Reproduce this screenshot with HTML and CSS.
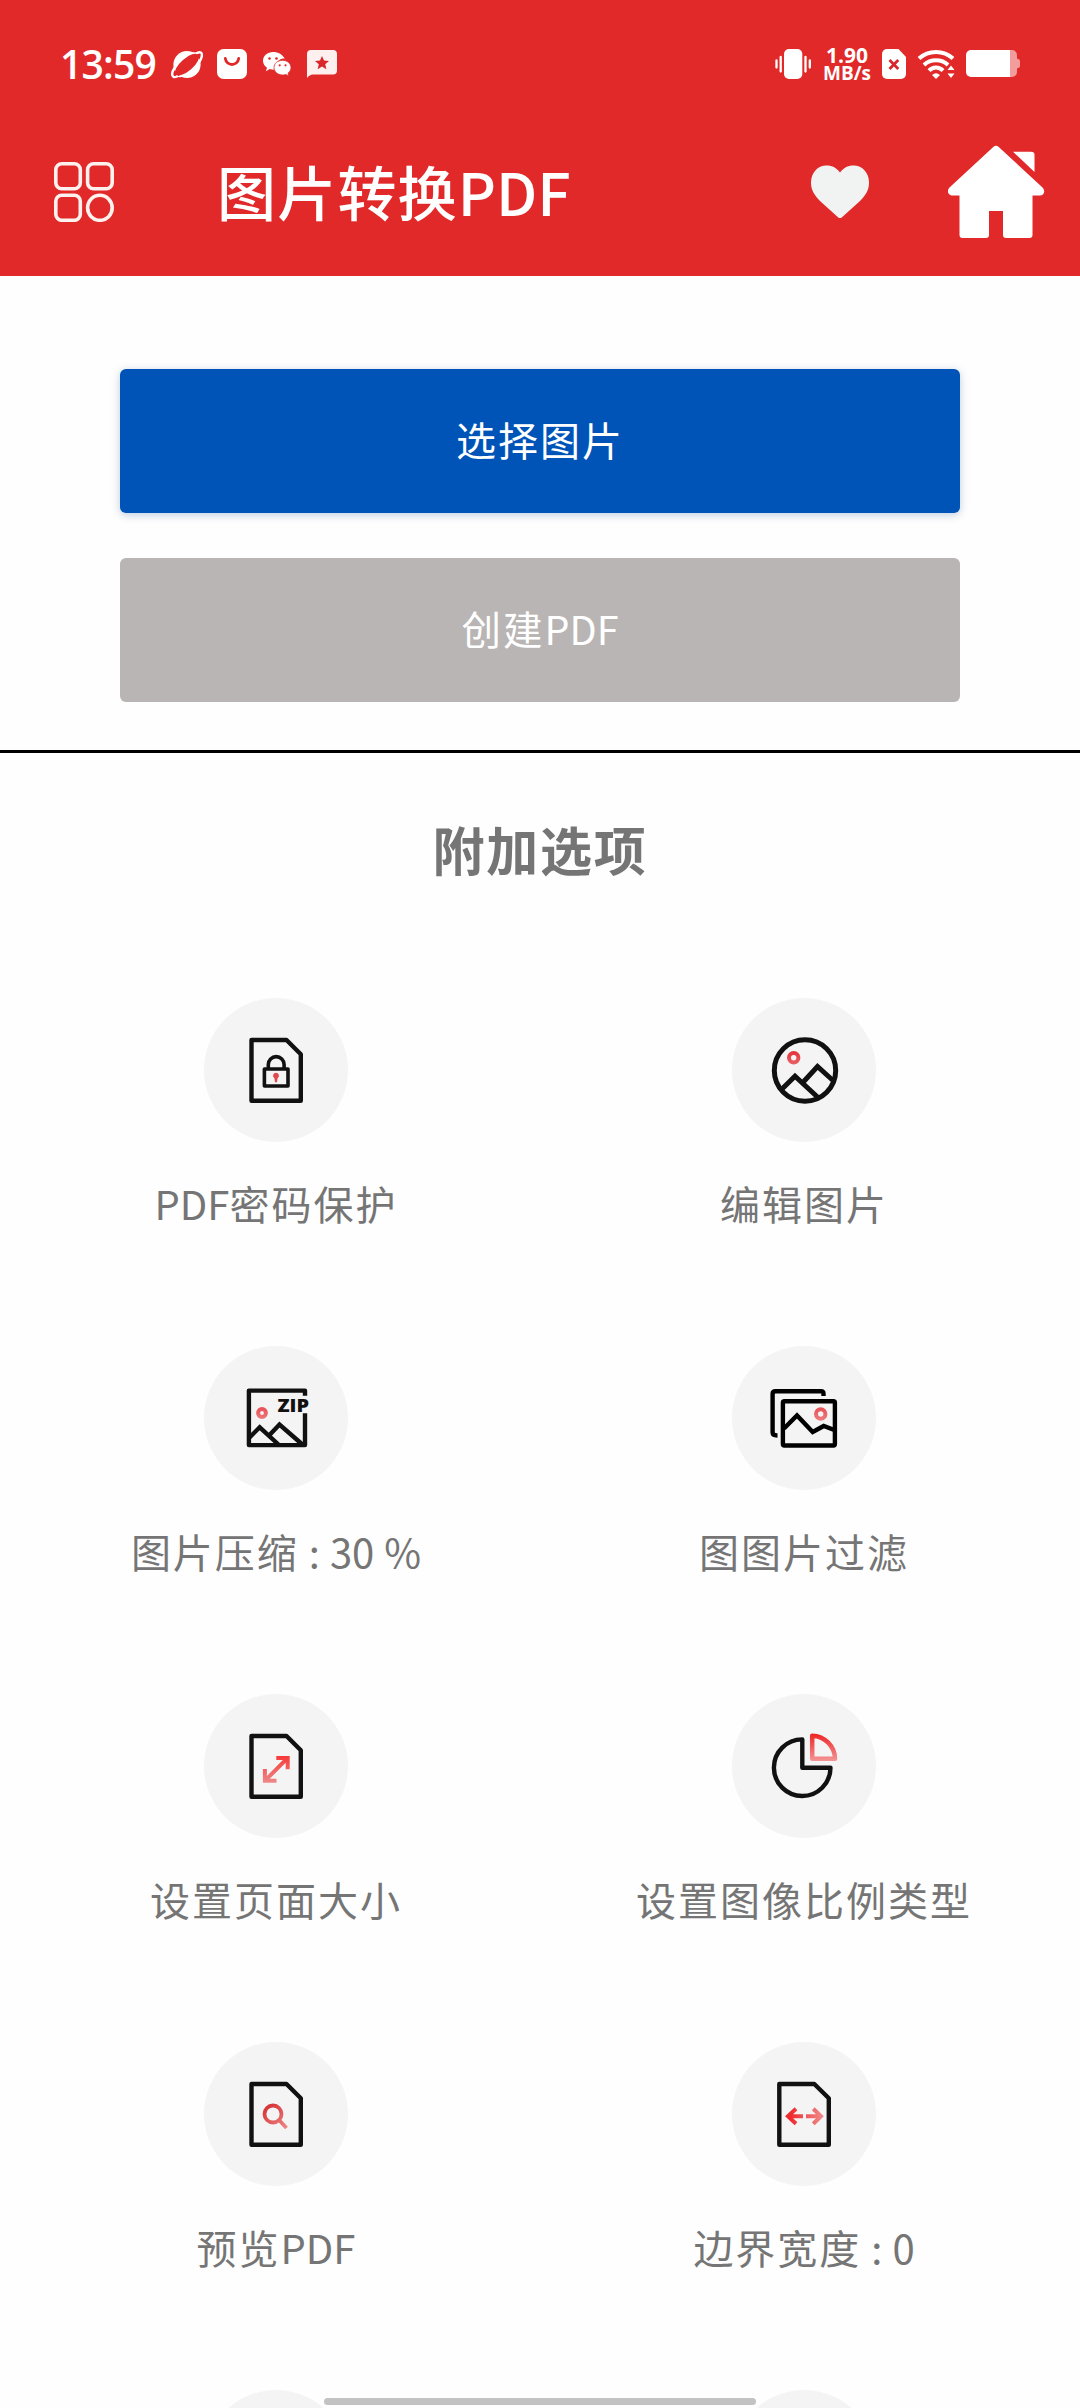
FILE: index.html
```html
<!DOCTYPE html>
<html lang="zh-CN">
<head>
<meta charset="utf-8">
<title>图片转换PDF</title>
<link rel="stylesheet" href="styles.css">
</head>
<body>
<svg class="defs" width="0" height="0" aria-hidden="true">
  <defs>
    <linearGradient id="fade" gradientUnits="userSpaceOnUse" x1="0" y1="58" x2="0" y2="90"><stop offset="0" stop-color="#f82c2c"/><stop offset="1" stop-color="#ee8d8d"/></linearGradient>
    <linearGradient id="fadePie" gradientUnits="userSpaceOnUse" x1="0" y1="40" x2="0" y2="68"><stop offset="0" stop-color="#ee2525"/><stop offset="1" stop-color="#f49a9a"/></linearGradient>
    <linearGradient id="fadeDot" gradientUnits="userSpaceOnUse" x1="0" y1="52" x2="0" y2="78"><stop offset="0" stop-color="#e22f36"/><stop offset="1" stop-color="#f08a8a"/></linearGradient>
    <linearGradient id="fadeSide" gradientUnits="userSpaceOnUse" x1="58" y1="0" x2="92" y2="0"><stop offset="0" stop-color="#f02a2e"/><stop offset="1" stop-color="#f08c8c"/></linearGradient>
    <linearGradient id="fadeLens" gradientUnits="userSpaceOnUse" x1="62" y1="62" x2="82" y2="88"><stop offset="0" stop-color="#d62c30"/><stop offset="1" stop-color="#ec8c8a"/></linearGradient>
  </defs>
</svg>
<div class="screen">
  <header class="top">
    <div class="status">
      <div class="status-left">
        <span class="clock">13:59</span>
        <svg class="i-planet" viewBox="171 49 32 31" width="32" height="31"><circle cx="187" cy="64.5" r="13.6" fill="#fff"/><ellipse cx="187" cy="64.6" rx="15" ry="6.2" transform="rotate(-41 187 64.6)" fill="#e12929"/><path d="M177 76.5C172 79 170.500 74 174.500 68M197 53C202.500 50.500 203.500 55 199.500 62" stroke="#fff" stroke-width="2.4" fill="none" stroke-linecap="round"/><path d="M174 67.500C178 59 190 50.500 198 53.500M200 61.500C196 70 184 79 176 76" stroke="#fff" stroke-width="1.200" fill="none"/></svg>
        <svg class="i-bag" viewBox="217 49 30 30" width="30" height="30"><rect x="217" y="49" width="30" height="30" rx="6.500" fill="#fff"/><path d="M225.300 58.500C226.500 66.500 237.500 66.500 238.700 58.500" fill="none" stroke="#e12929" stroke-width="2.800" stroke-linecap="round"/></svg>
        <svg class="i-chat" viewBox="262 51 31 26" width="31" height="26"><path d="M273 52c-5.500 0-10 3.900-10 8.800 0 2.900 1.500 5.300 4 7l-1.200 3.400 4-2.100c3 .8 5 .8 7 .2-2-7 4-12 8-10.500C282.500 54.500 278.500 52 273 52z" fill="#fff"/><path d="M282.500 60.300c-4.800 0-8.500 3.200-8.500 7.300s3.700 7.400 8.500 7.400c1.200 0 2.300-.2 3.300-.6l3 1.600-.8-2.800c2-1.400 3-3.400 3-5.600 0-4.100-3.800-7.300-8.500-7.300z" fill="#fff" stroke="#e12929" stroke-width=".8"/><g fill="#e12929"><circle cx="269.500" cy="58.500" r="1.300"/><circle cx="276.500" cy="58.500" r="1.300"/><circle cx="279.700" cy="65.300" r="1.100"/><circle cx="285.500" cy="65.300" r="1.100"/></g></svg>
        <svg class="i-star" viewBox="307 50 30 29" width="30" height="29"><path d="M311 50h22a4 4 0 0 1 4 4v16.500a4 4 0 0 1-4 4h-20c-2.500 0-4 1.500-6 3.500V54a4 4 0 0 1 4-4z" fill="#fff0f0"/><path d="M322 56l2 4.600 5 .4-3.800 3.300 1.200 4.900-4.400-2.600-4.400 2.600 1.200-4.900L315 61l5-.4z" fill="#d8262a"/></svg>
      </div>
      <div class="status-right">
        <svg viewBox="773 48 38 32" width="38" height="32"><rect x="783" y="49" width="18.300" height="30" rx="5" fill="#fff"/><path d="M775.500 60.500v7M779.700 57v14.500M804.500 57v14.500M808.800 60.500v7" stroke="#fff" stroke-width="2.300" stroke-linecap="round"/></svg>
        <div class="speed"><span>1.90</span><span>MB/s</span></div>
        <svg class="i-sim" viewBox="882 49 24 30" width="24" height="30"><path d="M887 49h11.500l7.500 8v17a5 5 0 0 1-5 5H887a5 5 0 0 1-5-5V54a5 5 0 0 1 5-5z" fill="#fff"/><path d="M889.500 60l8.800 9M898.300 60l-8.800 9" stroke="#d8262a" stroke-width="2.700"/></svg>
        <svg class="i-wifi" viewBox="917 49 39 31" width="39" height="31"><g fill="none" stroke="#fff" stroke-width="4"><path d="M919 58.500C928.500 49.800 943.500 49.800 953 58.500"/><path d="M924 65C930.500 58.800 941.500 58.800 948 65"/><path d="M929 70.700C933 66.500 939 66.500 943 70.700"/></g><path d="M932 75q4-3.500 8 0l-4 4z" fill="#fff"/><path d="M947.500 70h7l-3.500-4.500zM947.500 73.500h7l-3.500 4.500z" fill="#fff"/></svg>
        <svg class="i-battery" viewBox="966 52 54 28" width="54" height="28"><path d="M1010 52h2a5 5 0 0 1 5 5v3.500l2.200 1q.8.500.8 1.500v5q0 1-.8 1.500l-2.200 1V74a5 5 0 0 1-5 5h-2z" fill="#f29c9c"/><path d="M971 52h39v27h-39a5 5 0 0 1-5-5V57a5 5 0 0 1 5-5z" fill="#fff"/></svg>
      </div>
    </div>
    <div class="bar">
      <svg class="i-menu" viewBox="54 162 60 60" width="60" height="60"><g fill="none" stroke="#fff1ee" stroke-width="3.600"><rect x="55.800" y="163.800" width="24.500" height="25" rx="6"/><rect x="87.600" y="163.800" width="24.600" height="25" rx="6"/><rect x="55.800" y="195.300" width="24.500" height="25" rx="6"/><ellipse cx="99.900" cy="207.800" rx="12.300" ry="12.500"/></g></svg>
      <h1 class="title"><span class="han">图片转换</span>PDF</h1>
      <svg class="i-heart" viewBox="811 165 58 54" width="58" height="54"><path d="M840 172.500C844.500 166.500 849 165.500 853.500 165.500 862.500 165.500 869 173 869 182.500 869 190 866 194.500 860 201L842 217.200Q840 219 838 217.200L820 201C814 194.500 811 190 811 182.500 811 173 817.500 165.500 826.500 165.500 831 165.500 835.500 166.500 840 172.500z" fill="#f0f3f2"/></svg>
      <svg class="i-home" viewBox="947 145 98 94" width="98" height="94" fill="#fff"><path d="M993 147.200Q996 144.500 999 147.200L1042.500 187.500C1046 191.500 1043.500 195.500 1040 195.500H1032.500V235Q1032.500 238 1029.500 238H1006Q1003 238 1003 235V211H989V235Q989 238 986 238H962.500Q959.500 238 959.500 235V195.500H952.500C949 195.500 946 191.500 949.500 187.500z"/><path d="M1013 151.700H1031Q1034.500 151.700 1034.500 155V172z"/></svg>
    </div>
  </header>

  <section class="actions">
    <button class="btn btn-primary"><span class="han">选择图片</span></button>
    <button class="btn btn-disabled"><span class="han">创建</span>PDF</button>
  </section>

  <main class="options">
    <h2 class="heading">附加选项</h2>
    <div class="grid">
      <div class="tile">
        <svg class="disc" viewBox="0 0 144 144"><path class="line" d="M47.500 42H82.500L96.800 56.300V102.800H47.500Z"/><g class="thin"><rect class="line" x="60.400" y="71" width="23.600" height="17"/><path class="line" d="M64.300 70V66.500a7.900 7.900 0 0 1 15.800 0V70"/></g><path d="M72 74.700a3 3 0 0 1 1.600 5.500L73 84.300h-2l-.6-4.100A3 3 0 0 1 72 74.700z" fill="#e04a4e"/></svg>
        <div class="label">PDF<span class="han">密码保护</span></div>
      </div>
      <div class="tile">
        <svg class="disc" viewBox="0 0 144 144"><circle class="line wide" cx="73" cy="72.500" r="30.700"/><path class="line wide miter" d="M49.500 91.500L63 78.200 86 99.500M71.300 84L85.500 68.500 101 82.500"/><circle class="dot" cx="61.700" cy="59.700" r="4.700"/></svg>
        <div class="label"><span class="han">编辑图片</span></div>
      </div>
      <div class="tile">
        <svg class="disc" viewBox="0 0 144 144"><path class="line" d="M101 49.700V44.600H44.900V99.100H101V67.300"/><path class="line miter" d="M45 92L55.700 81.300 75 99M66 88.500L75.500 78.500 99 99"/><circle class="dot" cx="58" cy="67" r="3.900"/><text class="zip" x="73.500" y="65.700" textLength="31.500" lengthAdjust="spacingAndGlyphs">ZIP</text></svg>
        <div class="label"><span class="han">图片压缩</span> : 30 %</div>
      </div>
      <div class="tile">
        <svg class="disc dark" viewBox="0 0 144 144"><rect class="line" x="50.900" y="55.200" width="52" height="44.300" rx="1.500"/><path class="line" d="M91.500 50V47.500Q91.500 45.200 89 45.200H43.500Q40.600 45.200 40.600 48V86.500Q40.600 89.500 45.500 89.500"/><path class="line miter" d="M52 82.500L65 69.500 80.700 86 91.700 80 103 84.300"/><circle class="dot" cx="88.700" cy="68" r="4.700"/></svg>
        <div class="label"><span class="han">图图片过滤</span></div>
      </div>
      <div class="tile">
        <svg class="disc" viewBox="0 0 144 144"><path class="line" d="M47.500 42H82.500L96.800 56.300V102.800H47.500Z"/><path d="M72.300 64H83.700V75.300M60.900 75V86.800H72.500M83 64.700L61.600 86.100" fill="none" stroke="url(#fade)" stroke-width="4"/></svg>
        <div class="label"><span class="han">设置页面大小</span></div>
      </div>
      <div class="tile">
        <svg class="disc" viewBox="0 0 144 144"><path class="line" d="M70.300 73.700V45.400A28.300 28.300 0 1 0 98.500 73.700Z"/><path d="M80.200 64.700V41.700A23.500 23.500 0 0 1 103 64.700Z" fill="none" stroke="url(#fadePie)" stroke-width="4.500" stroke-linejoin="round"/></svg>
        <div class="label"><span class="han">设置图像比例类型</span></div>
      </div>
      <div class="tile">
        <svg class="disc" viewBox="0 0 144 144"><path class="line" d="M47.500 42H82.500L96.800 56.300V102.800H47.500Z"/><g fill="none" stroke="url(#fadeLens)" stroke-width="3.800"><circle cx="69" cy="72" r="8.500"/><path d="M75 78L82.500 86"/></g></svg>
        <div class="label"><span class="han">预览</span>PDF</div>
      </div>
      <div class="tile">
        <svg class="disc" viewBox="0 0 144 144"><path class="line" d="M47.300 42H82.300L96.800 56.300V102.800H47.300Z"/><path d="M71 74.300H57M64 66.800L56 74.300 64 81.800M74 74.300H88M81.300 66.800L89 74.300 81.300 81.800" fill="none" stroke="url(#fadeSide)" stroke-width="4"/></svg>
        <div class="label"><span class="han">边界宽度</span> : 0</div>
      </div>
      <div class="tile"><svg class="disc" viewBox="0 0 144 144"></svg></div>
      <div class="tile"><svg class="disc" viewBox="0 0 144 144"></svg></div>
    </div>
  </main>
  <div class="home-pill"></div>
</div>
</body>
</html>
```

FILE: styles.css
```css
* { box-sizing: border-box; }
html, body { margin: 0; }
body {
  background: #fefefe;
  font-family: "Noto Sans CJK SC", "Noto Sans", sans-serif;
}
svg { display: block; flex: none; }
.defs { position: absolute; }
.screen {
  position: relative;
  width: 1080px;
  height: 2408px;
  overflow: hidden;
}
.top {
  height: 276px;
  background: #e12929;
  color: #fff;
}
.status {
  height: 128px;
  padding: 0 60px;
  display: flex;
  justify-content: space-between;
}
.status-left, .status-right {
  display: flex;
  align-items: center;
  height: 128px;
}
.clock {
  width: 111px;
  font: 600 39px/40px "Open Sans", sans-serif;
  letter-spacing: -0.8px;
  white-space: nowrap;
}
.i-bag { margin-left: 14px; }
.i-chat { margin-left: 15px; }
.i-star { margin-left: 14px; }
.speed {
  width: 50px;
  margin-left: 10px;
  padding-bottom: 1px;
  display: flex;
  flex-direction: column;
  align-items: center;
  font: 700 19px/18px "Open Sans", sans-serif;
  white-space: nowrap;
}
.speed span:first-child { font-size: 21px; }
.i-sim { margin-left: 10px; }
.i-wifi { margin-left: 11px; }
.i-battery { margin-left: 10px; }
.bar {
  height: 128px;
  padding: 0 35px 0 54px;
  display: flex;
  align-items: center;
}
.title {
  flex: 1;
  margin: 0 0 2px 103px;
  font-size: 59px;
  line-height: 80px;
  font-weight: 500;
  white-space: nowrap;
}
.title .han { letter-spacing: 1.2px; }
.i-home { margin-left: 78px; }
.actions {
  height: 477px;
  padding: 93px 120px 0;
  display: flex;
  flex-direction: column;
  gap: 45px;
  border-bottom: 3px solid #000;
}
.btn {
  height: 144px;
  padding: 0 0 4px;
  border: 0;
  border-radius: 6px;
  color: #fff;
  font: 400 40px/56px "Noto Sans CJK SC", sans-serif;
}
.btn-primary {
  background: #0054b8;
  box-shadow: 0 2px 8px rgba(0, 60, 130, 0.25);
}
.btn-disabled {
  background: #b9b5b4;
  font-size: 39.5px;
}
.han { letter-spacing: 2px; }
.heading {
  margin: 0;
  padding-top: 57px;
  height: 245px;
  text-align: center;
  color: #757575;
  font-size: 52px;
  font-weight: 700;
  line-height: 78px;
  letter-spacing: 1.8px;
}
.grid {
  padding: 0 12px;
  display: grid;
  grid-template-columns: 1fr 1fr;
  grid-auto-rows: 348px;
}
.tile {
  display: flex;
  flex-direction: column;
  align-items: center;
}
.disc {
  width: 144px;
  height: 144px;
  border-radius: 50%;
  background: #f4f4f4;
}
.line {
  fill: none;
  stroke: #111;
  stroke-width: 4.4;
  stroke-linejoin: round;
}
.dark .line { stroke: #000; }
.thin .line { stroke-width: 3.6; }
.line.wide { stroke-width: 5; }
.line.miter { stroke-linejoin: miter; }
.dot {
  fill: none;
  stroke: url(#fadeDot);
  stroke-width: 4;
}
.zip {
  font: 800 18px "Open Sans", sans-serif;
  fill: #111;
}
.label {
  margin-top: 33px;
  color: #757575;
  font-size: 40px;
  line-height: 56px;
  word-spacing: 1px;
  white-space: pre;
}
.home-pill {
  position: absolute;
  left: 324px;
  bottom: 3px;
  width: 432px;
  height: 7px;
  border-radius: 4px;
  background: #c2c2c2;
}
```
